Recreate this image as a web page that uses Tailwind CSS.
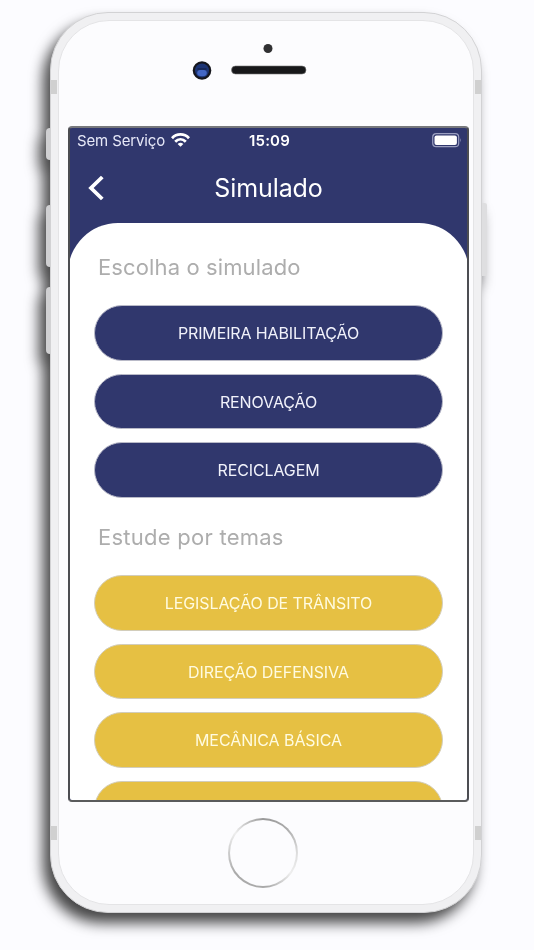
<!DOCTYPE html>
<html lang="pt-BR">
<head>
    <meta charset="UTF-8">
    <meta name="viewport" content="width=device-width, initial-scale=1.0">
    <title>Simulado</title>
    <script src="https://cdn.jsdelivr.net/npm/@tailwindcss/browser@4"></script>
</head>
<body class="bg-[#fcfcff] font-['Inter',sans-serif] h-[950px] overflow-hidden">
    <!-- Phone -->
    <div class="relative ml-[50px] mt-3 w-[432px] h-[901px] drop-shadow-[-7px_10px_7px_rgba(0,0,0,0.72)]">
        <!-- Side buttons -->
        <div class="absolute -left-1 top-[116px] w-2 h-8 rounded-l-sm bg-[#d0d0d2]"></div>
        <div class="absolute -left-1 top-[193px] w-2 h-[62px] rounded-l-sm bg-[#d0d0d2]"></div>
        <div class="absolute -left-1 top-[275px] w-2 h-[67px] rounded-l-sm bg-[#d0d0d2]"></div>
        <div class="absolute -right-[5px] top-[191px] w-2 h-[73px] rounded-r-xs bg-[#dedee0]"></div>

        <!-- Frame -->
        <div class="relative h-full rounded-[58px] border border-[#d2d2d4] bg-[#f0f0f2] p-[7px]">
            <div class="absolute left-0 top-[67px] w-1.5 h-[14px] bg-[#d0d0d0]"></div>
            <div class="absolute right-0 top-[67px] w-1.5 h-[14px] bg-[#d0d0d0]"></div>
            <div class="absolute left-0 bottom-[72px] w-1.5 h-[14px] bg-[#d0d0d0]"></div>
            <div class="absolute right-0 bottom-[72px] w-1.5 h-[14px] bg-[#d0d0d0]"></div>

            <div class="h-full rounded-[51px] border border-[#e4e4e6] bg-[#fcfcfe] flex flex-col items-center">
                <!-- Camera and speaker -->
                <div class="h-[105px] shrink-0 w-full">
                    <svg class="w-full h-[105px]" viewBox="59 21 414 105">
                        <circle cx="268" cy="48.500" r="4.500" fill="#303032"/>
                        <circle cx="202" cy="70.500" r="9.300" fill="#15161d"/>
                        <circle cx="202" cy="70.500" r="7" fill="#1c3474"/>
                        <ellipse cx="202" cy="73" rx="4.800" ry="3.200" fill="#4266c4"/>
                        <path d="M197.500 69h9" stroke="#14234f" stroke-width="1.500"/>
                        <rect x="231.500" y="66" width="74.500" height="8" rx="4" fill="#17181a" stroke="#777" stroke-width=".6"/>
                    </svg>
                </div>

                <!-- Screen -->
                <div class="relative left-[2.5px] w-[401px] h-[676px] shrink-0 rounded-[4px] border-2 border-t-[#77787c] border-x-[#4c4d52] border-b-[#5a5b5c] bg-[#30376d] overflow-hidden flex flex-col">
                    <!-- Status bar -->
                    <div class="grid grid-cols-3 items-center h-[26px] pl-[7px] pr-[5px] text-white shrink-0">
                        <div class="flex items-center gap-[6px] text-[15px] tracking-[-0.13px] whitespace-nowrap text-[#e6e8f8]">
                            <span>Sem Serviço</span>
                            <svg class="relative -top-px w-[19px] h-[14px]" viewBox="0 0 19 14" fill="none" stroke="#fff" stroke-width="2.800">
                                <path d="M1 5.200C5.700.2 13.300.2 18 5.200"/>
                                <path d="M4.200 8.700C7.300 5.600 11.700 5.600 14.800 8.700"/>
                                <path d="M9.500 13.800L6.600 10.900Q9.500 8.600 12.400 10.900Z" fill="#fff" stroke="none"/>
                            </svg>
                        </div>
                        <div class="text-center text-[15px] font-semibold tracking-[0.2px]">15:09</div>
                        <svg class="relative -top-px justify-self-end w-[30px] h-[15px]" viewBox="0 0 30 15">
                            <rect x=".7" y=".7" width="26" height="13" rx="3.500" fill="none" stroke="#9a9ec0" stroke-width="1.200"/>
                            <rect x="2.500" y="2.500" width="22.400" height="9.500" rx="2" fill="#fff"/>
                            <path d="M28.300 5q1.600 2.200 0 4.500z" fill="#9a9ec0"/>
                        </svg>
                    </div>

                    <!-- Title bar -->
                    <div class="relative h-[68.500px] shrink-0 flex items-center justify-center text-white">
                        <svg class="absolute left-[17px] top-[21px] w-[18px] h-[26px]" viewBox="0 0 18 26" fill="none" stroke="#fff" stroke-width="3.800">
                            <path d="M15.300 2L4 13L15.300 24"/>
                        </svg>
                        <h1 class="text-[25px] tracking-[-0.1px]">Simulado</h1>
                    </div>

                    <!-- Content -->
                    <div class="-mx-0.5 grow rounded-t-[50px] bg-white px-[26px] pt-7">
                        <h2 class="ml-1 text-[22px] leading-8 tracking-[0.12px] text-[#adadad]">Escolha o simulado</h2>
                        <div class="mt-[22.500px] flex flex-col gap-[13px] text-[16px] tracking-[-0.12px] text-[#f1f2fb]">
                            <button class="h-[55.700px] shrink-0 rounded-full border border-[#b9bac8] bg-[#30376d]">PRIMEIRA HABILITAÇÃO</button>
                            <button class="h-[55.700px] shrink-0 rounded-full border border-[#b9bac8] bg-[#30376d]">RENOVAÇÃO</button>
                            <button class="h-[55.700px] shrink-0 rounded-full border border-[#b9bac8] bg-[#30376d]">RECICLAGEM</button>
                        </div>
                        <h2 class="mt-[22.500px] ml-1 text-[22px] leading-8 tracking-[0.25px] text-[#adadad]">Estude por temas</h2>
                        <div class="mt-[22.500px] flex flex-col gap-[13px] text-[16px] tracking-[-0.08px] text-[#fffbe0]">
                            <button class="h-[55.700px] shrink-0 rounded-full border border-[#d2cdbb] bg-[#e6c043]">LEGISLAÇÃO DE TRÂNSITO</button>
                            <button class="h-[55.700px] shrink-0 rounded-full border border-[#d2cdbb] bg-[#e6c043]">DIREÇÃO DEFENSIVA</button>
                            <button class="h-[55.700px] shrink-0 rounded-full border border-[#d2cdbb] bg-[#e6c043]">MECÂNICA BÁSICA</button>
                            <button class="h-[55.700px] shrink-0 rounded-full border border-[#d2cdbb] bg-[#e6c043]"></button>
                        </div>
                    </div>
                </div>

                <!-- Home button -->
                <div class="relative -left-[3px] mt-4 size-[70px] shrink-0 rounded-full bg-[conic-gradient(#999,#aaa_12%,#ddd_25%,#eee_35%,#aaa_48%,#aaa_65%,#ccc_75%,#eee_85%,#999)] p-[2px]">
                    <div class="size-full rounded-full bg-[#fcfcfe]"></div>
                </div>
            </div>
        </div>
    </div>
</body>
</html>
